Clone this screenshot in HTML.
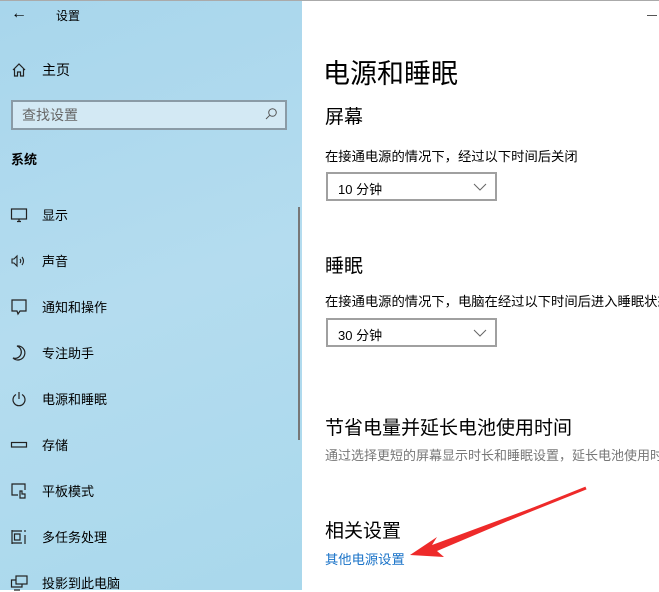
<!DOCTYPE html>
<html><head><meta charset="utf-8"><style>
*{margin:0;padding:0;box-sizing:border-box}
body{width:659px;height:590px;overflow:hidden;background:#fff;font-family:"Liberation Sans","Noto Sans CJK SC",sans-serif;color:#000;position:relative}
.side{position:absolute;left:0;top:0;width:302px;height:590px;background:linear-gradient(160deg,#a8d6ec 0%,#b4dcef 50%,#a9d8ec 100%)}
.t{position:absolute;white-space:nowrap}
.ic{position:absolute;left:10px;width:18px;height:18px}
.item{position:absolute;left:42px;font-size:13px}
.dd{position:absolute;left:326px;width:171px;height:29px;border:2px solid #a0a0a0;background:#fff}
.dd span{position:absolute;left:10px;top:5px;font-size:13px}
</style></head><body>
<div style="position:absolute;left:0;top:0;width:659px;height:1px;background:#aaa;z-index:2"></div>
<div class="side">
 <div class="t" style="left:11px;top:5px;font-size:16px">←</div>
 <div class="t" style="left:56px;top:7px;font-size:12px">设置</div>
 <svg class="ic" style="top:61px" viewBox="0 0 18 18" fill="none" stroke="#222" stroke-width="1.2"><path d="M3 9 L9 3 L15 9 M4.5 8 V15 H7.5 V11 H10.5 V15 H13.5 V8"/></svg>
 <div class="t" style="left:42px;top:60px;font-size:14px">主页</div>
 <div style="position:absolute;left:11px;top:100px;width:276px;height:30px;border:2px solid #8a9ba6;background:#d3e9f4"></div>
 <div class="t" style="left:22px;top:105px;font-size:14px;color:#666">查找设置</div>
 <svg style="position:absolute;left:264px;top:107px" width="14" height="14" viewBox="0 0 14 14" fill="none" stroke="#555" stroke-width="1"><circle cx="8.5" cy="5.5" r="3.8"/><path d="M5.7 8.3 L2 12"/></svg>
 <div class="t" style="left:11px;top:149px;font-size:13px;font-weight:bold">系统</div>
 <svg class="ic" style="top:206px" viewBox="0 0 18 18" fill="none" stroke="#222" stroke-width="1.2"><rect x="1.5" y="3" width="15" height="10"/><path d="M7 15.5 H11 M9 13 V15.5"/></svg>
 <div class="item t" style="top:205px">显示</div>
 <svg class="ic" style="top:252px" viewBox="0 0 18 18" fill="none" stroke="#222" stroke-width="1.1"><path d="M2 7 H4 L7 4 V14 L4 11 H2 Z M10 7 Q11.5 9 10 11 M12 5 Q15 9 12 13"/></svg>
 <div class="item t" style="top:251px">声音</div>
 <svg class="ic" style="top:298px" viewBox="0 0 18 18" fill="none" stroke="#222" stroke-width="1.2"><path d="M2 2 H16 V13 H10 L8 16 L7 13 H2 Z"/></svg>
 <div class="item t" style="top:297px">通知和操作</div>
 <svg class="ic" style="top:344px" viewBox="0 0 18 18" fill="none" stroke="#222" stroke-width="1.2"><path d="M7 2 A7 7 0 1 1 3 14 A6 6 0 0 0 7 2 Z"/></svg>
 <div class="item t" style="top:343px">专注助手</div>
 <svg class="ic" style="top:390px" viewBox="0 0 18 18" fill="none" stroke="#222" stroke-width="1.2"><path d="M6 4.5 A6 6 0 1 0 12 4.5 M9 2 V9"/></svg>
 <div class="item t" style="top:389px">电源和睡眠</div>
 <svg class="ic" style="top:436px" viewBox="0 0 18 18" fill="none" stroke="#222" stroke-width="1.2"><rect x="1.5" y="6.5" width="15" height="4.5"/></svg>
 <div class="item t" style="top:435px">存储</div>
 <svg class="ic" style="top:482px" viewBox="0 0 18 18" fill="none" stroke="#222" stroke-width="1.2"><path d="M8 13 H2 V2 H15 V8 M10 16 V9 H12 V12 H15 V16 Z"/></svg>
 <div class="item t" style="top:481px">平板模式</div>
 <svg class="ic" style="top:528px" viewBox="0 0 18 18" fill="none" stroke="#222" stroke-width="1.2"><path d="M2 2 V16 M2 3 H12 M2 15 H12 M4.5 6 H10 V12 H4.5 Z M15 2 V4 M15 7 V16"/></svg>
 <div class="item t" style="top:527px">多任务处理</div>
 <svg class="ic" style="top:574px" viewBox="0 0 18 18" fill="none" stroke="#222" stroke-width="1.2"><rect x="6" y="2" width="11" height="8"/><path d="M6 6 H1.5 V13 H12 V10 M4 16 H10"/></svg>
 <div class="item t" style="top:573px">投影到此电脑</div>
 <div style="position:absolute;left:298px;top:207px;width:2px;height:233px;background:#777"></div>
</div>
<div style="position:absolute;left:647px;top:15px;width:10px;height:1px;background:#555"></div>
<div class="t" style="left:323px;top:52px;font-size:27px">电源和睡眠</div>
<div class="t" style="left:325px;top:102px;font-size:19px">屏幕</div>
<div class="t" style="left:325px;top:146px;font-size:13.3px">在接通电源的情况下，经过以下时间后关闭</div>
<div class="dd" style="top:172px"><span>10 分钟</span><svg style="position:absolute;right:8px;top:9px" width="14" height="8" viewBox="0 0 14 8" fill="none" stroke="#666"><path d="M1 1 L7 7 L13 1"/></svg></div>
<div class="t" style="left:325px;top:251px;font-size:19px">睡眠</div>
<div class="t" style="left:325px;top:291px;font-size:13.3px">在接通电源的情况下，电脑在经过以下时间后进入睡眠状态</div>
<div class="dd" style="top:318px"><span>30 分钟</span><svg style="position:absolute;right:8px;top:9px" width="14" height="8" viewBox="0 0 14 8" fill="none" stroke="#666"><path d="M1 1 L7 7 L13 1"/></svg></div>
<div class="t" style="left:325px;top:413px;font-size:19px">节省电量并延长电池使用时间</div>
<div class="t" style="left:325px;top:445px;font-size:13px;color:#777">通过选择更短的屏幕显示时长和睡眠设置，延长电池使用时间</div>
<div class="t" style="left:325px;top:516px;font-size:19px">相关设置</div>
<div class="t" style="left:325px;top:549px;font-size:13.3px;color:#1a73c8">其他电源设置</div>
<svg style="position:absolute;left:0;top:0" width="659" height="590"><path d="M586 488 L432 545 L437 537 L410 555 L444 557 L437 551 Z" fill="#ee2a2a"/><path d="M586 488 L436 548" stroke="#ee2a2a" stroke-width="3"/></svg>
</body></html>
